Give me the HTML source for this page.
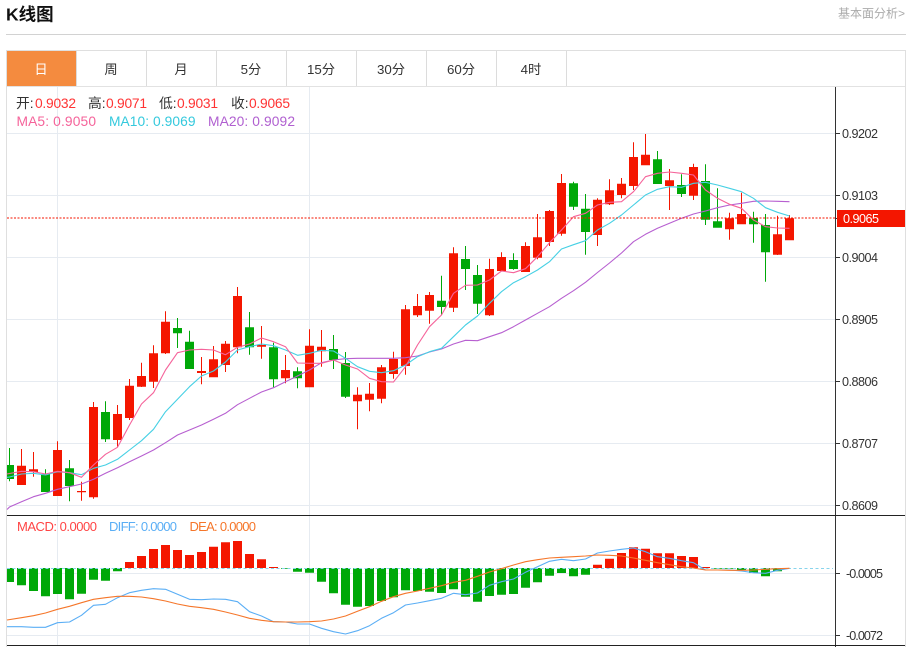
<!DOCTYPE html>
<html lang="zh">
<head>
<meta charset="utf-8">
<title>K线图</title>
<style>
html,body{margin:0;padding:0;background:#fff;width:910px;height:647px;overflow:hidden}
svg{display:block;position:absolute;left:0;top:0}
text{font-family:"Liberation Sans","Noto Sans CJK SC",sans-serif}
</style>
</head>
<body>
<svg width="910" height="647" viewBox="0 0 910 647" xmlns="http://www.w3.org/2000/svg">
<rect width="910" height="647" fill="#fff"/>
<text x="6" y="20.500" font-size="17.500" font-weight="700" fill="#111">K线图</text>
<text x="905" y="17.500" font-size="12" fill="#aaa" text-anchor="end">基本面分析&gt;</text>
<rect x="6" y="34" width="900" height="1" fill="#d2d2d2"/>

<!-- frame -->
<rect x="6" y="50" width="900" height="1" fill="#dfdfdf"/>
<rect x="6" y="50" width="1" height="597" fill="#dfdfdf"/>
<rect x="905" y="50" width="1" height="597" fill="#dfdfdf"/>
<rect x="7" y="86" width="898" height="1" fill="#e2e2e2"/>
<rect x="7" y="51" width="69" height="35" fill="#f48b3f"/>
<path d="M76 51h1v35h-1zM146 51h1v35h-1zM216 51h1v35h-1zM286 51h1v35h-1zM356 51h1v35h-1zM426 51h1v35h-1zM496 51h1v35h-1zM566 51h1v35h-1z" fill="#dcdcdc"/>
<g font-size="13.300" fill="#333" text-anchor="middle">
<text x="41" y="74" fill="#fff">日</text>
<text x="111" y="74">周</text>
<text x="181" y="74">月</text>
<text x="251" y="74">5分</text>
<text x="321" y="74">15分</text>
<text x="391" y="74">30分</text>
<text x="461" y="74">60分</text>
<text x="531" y="74">4时</text>
</g>

<!-- grid -->
<path d="M7 133h828v1H7zM7 195h828v1H7zM7 257h828v1H7zM7 319h828v1H7zM7 381h828v1H7zM7 443h828v1H7zM7 505h828v1H7zM7 573h828v1H7zM7 635h828v1H7zM57 87h1v558h-1zM309 87h1v558h-1z" fill="#e6ebf1"/>

<!-- candles: green -->
<path fill="#00a808" d="M9 448h1V481.3h-1zM45 469.3h1V492h-1zM69 460h1V501.3h-1zM105 401.3h1V442h-1zM177 318h1V348h-1zM189 330.7h1V369h-1zM249 312h1V354.7h-1zM273 342.7h1V387.3h-1zM297 367.3h1V388.3h-1zM333 335h1V369h-1zM345 352h1V398h-1zM441 275.7h1V315h-1zM465 246h1V290h-1zM477 265h1V314h-1zM513 253.3h1V269.7h-1zM573 181.7h1V210h-1zM585 194h1V254.7h-1zM657 151h1V184h-1zM681 174.3h1V197h-1zM705 164.3h1V225h-1zM717 188.3h1V227.7h-1zM753 211.7h1V242.7h-1zM765 214h1V281.7h-1z
M7 465h7V479H7zM41 474h9V492h-9zM65 468.3h9V486h-9zM101 412h9V439.3h-9zM173 328h9V333.3h-9zM185 341.7h9V369h-9zM245 327.3h9V347.3h-9zM269 347.3h9V379.3h-9zM293 371.3h9V378.3h-9zM329 349h9V360h-9zM341 363h9V396.7h-9zM437 300.7h9V307h-9zM461 259h9V269h-9zM473 275h9V303.7h-9zM509 260h9V269h-9zM569 183.3h9V206.7h-9zM581 208.7h9V232h-9zM653 159.3h9V184h-9zM677 185h9V194h-9zM701 181h9V219.7h-9zM713 221.3h9V227.7h-9zM749 218h9V224.3h-9zM761 225h9V252.3h-9z"/>
<!-- candles: red -->
<path fill="#f41600" d="M21 449h1V485h-1zM33 452h1V476.7h-1zM57 441.3h1V496h-1zM81 481.7h1V500.7h-1zM93 402h1V498.7h-1zM117 405h1V446.7h-1zM129 379h1V420h-1zM141 362.7h1V387h-1zM153 345.3h1V388h-1zM165 311.3h1V354h-1zM201 357h1V384.3h-1zM213 346h1V377.3h-1zM225 341h1V372h-1zM237 287h1V353.3h-1zM261 326h1V358.7h-1zM285 355h1V383.3h-1zM309 329.3h1V387.3h-1zM321 330h1V366.7h-1zM357 387.3h1V429.3h-1zM369 383h1V411.3h-1zM381 365h1V403.3h-1zM393 351.7h1V378.7h-1zM405 305h1V374.7h-1zM417 294h1V317h-1zM429 292h1V323.7h-1zM453 247.3h1V312h-1zM489 258.7h1V316h-1zM501 252.3h1V271.3h-1zM525 242.3h1V272h-1zM537 214h1V259.3h-1zM549 210h1V246h-1zM561 174h1V235.7h-1zM597 198.3h1V246h-1zM609 179.3h1V205h-1zM621 178h1V198.3h-1zM633 142.3h1V190h-1zM645 134h1V165.3h-1zM669 169h1V210h-1zM693 163.7h1V200h-1zM729 212.7h1V239.7h-1zM741 192.7h1V224.3h-1zM777 215.7h1V255h-1zM789 215h1V240.3h-1z
M17 465.7h9V485h-9zM29 469.3h9V472h-9zM53 450h9V496h-9zM77 491h9V492.3h-9zM89 407h9V497.3h-9zM113 414h9V440h-9zM125 385.7h9V418h-9zM137 376h9V386.7h-9zM149 353.3h9V381.7h-9zM161 321.7h9V353.3h-9zM197 371h9V373h-9zM209 359.3h9V377.3h-9zM221 343.7h9V365h-9zM233 296h9V347.3h-9zM257 345h9V346.7h-9zM281 370h9V378.3h-9zM305 345.7h9V387.3h-9zM317 346.7h9V351.3h-9zM353 394.7h9V401.3h-9zM365 393.7h9V399.7h-9zM377 367.3h9V398.7h-9zM389 359h9V374h-9zM401 309.3h9V366h-9zM413 306h9V315.3h-9zM425 295h9V310.7h-9zM449 253.3h9V307.7h-9zM485 269h9V315.3h-9zM497 257h9V271h-9zM521 246h9V272h-9zM533 237.3h9V257.7h-9zM545 211h9V242h-9zM557 183h9V233.7h-9zM593 199.7h9V235h-9zM605 190.3h9V204.3h-9zM617 183.7h9V195h-9zM629 157h9V186h-9zM641 154.7h9V165.3h-9zM665 180.3h9V186h-9zM689 167h9V195.7h-9zM725 218.3h9V229.3h-9zM737 214h9V224.3h-9zM773 234.3h9V254.7h-9zM785 218.3h9V240.3h-9z"/>

<!-- MA lines -->
<g fill="none" stroke-width="1.100" stroke-linejoin="round">
<path stroke="#b75fd0" d="M7 509.5L9.500 507L21.500 501.700L33.500 496.700L45.500 493.300L57.500 489.300L69.500 486.700L81.500 484L93.500 479.300L105.500 473.300L117.500 467.700L129.500 461.700L141.500 456L153.500 450L165.500 442.700L177.500 435L189.500 430L201.500 425L213.500 419.300L225.500 413.300L237.500 404.700L249.500 398.300L261.500 392L273.500 387.700L285.500 381.700L297.500 376L309.500 370L321.500 362.700L333.500 360L345.500 358.700L357.500 358.300L369.500 358.300L381.500 358.300L393.500 358.300L405.500 357.700L417.500 356L429.500 352L441.500 349L453.500 344L465.500 340.300L477.500 340.700L489.500 336.700L501.500 332.700L513.500 326.700L525.500 320L537.500 313.300L549.500 306.700L561.500 298.300L573.500 290.700L585.500 282.300L597.500 272.500L609.500 263L621.500 253L633.500 241.700L645.500 234.300L657.500 228.300L669.500 223.300L681.500 218.300L693.500 214L705.500 211L717.500 207.700L729.500 205L741.500 203.300L753.500 201.300L765.500 201L777.500 201.300L789.500 201.700"/>
<path stroke="#46d0e4" d="M7 477.300L9.500 477L21.500 474L33.500 473.300L45.500 475L57.500 471.700L69.500 472.700L81.500 474.700L93.500 468.300L105.500 465L117.500 459.300L129.500 450L141.500 440.700L153.500 429.300L165.500 411.700L177.500 399.300L189.500 386.700L201.500 376L213.500 371L225.500 362L237.500 350L249.500 346.700L261.500 344L273.500 345.700L285.500 350L297.500 355.300L309.500 353.300L321.500 350.300L333.500 351L345.500 358.300L357.500 366.700L369.500 371.300L381.500 372.700L393.500 370.700L405.500 365L417.500 356.700L429.500 351.700L441.500 348.300L453.500 336.700L465.500 325L477.500 316L489.500 303.300L501.500 291.700L513.500 282.700L525.500 276.700L537.500 270L549.500 261.700L561.500 249L573.500 244.700L585.500 240.700L597.500 230L609.500 223.300L621.500 215L633.500 205L645.500 195L657.500 189.300L669.500 186.700L681.500 187.300L693.500 183.300L705.500 182.300L717.500 185L729.500 188.300L741.500 191.700L753.500 198.300L765.500 207.700L777.500 212.300L789.500 216"/>
<path stroke="#f5639a" d="M7 474L9.500 473.500L21.500 471.300L33.500 471.700L45.500 474L57.500 471.300L69.500 472.700L81.500 477.300L93.500 465L105.500 454.300L117.500 447.300L129.500 425L141.500 404L153.500 392.700L165.500 370L177.500 352.700L189.500 350L201.500 349.300L213.500 350L225.500 354.700L237.500 347.300L249.500 344L261.500 338L273.500 341.700L285.500 346.700L297.500 363L309.500 363.300L321.500 363.300L333.500 360L345.500 365L357.500 369L369.500 378.300L381.500 381.700L393.500 382L405.500 366.700L417.500 345L429.500 326.700L441.500 315L453.500 293.300L465.500 285.300L477.500 285L489.500 280L501.500 271L513.500 272.700L525.500 268.700L537.500 256.700L549.500 242.700L561.500 230L573.500 216.700L585.500 213.300L597.500 205L609.500 202.300L621.500 201.700L633.500 191.700L645.500 176.700L657.500 173.300L669.500 172L681.500 173.300L693.500 175L705.500 190L717.500 198.300L729.500 204.300L741.500 208.300L753.500 220L765.500 226.700L777.500 228L789.500 228.300"/>
</g>

<!-- current price -->
<line x1="7" y1="218" x2="835" y2="218" stroke="#f41600" stroke-width="1" stroke-dasharray="2 1.500"/>

<!-- legends -->
<g font-size="13.800">
<text x="16" y="108" fill="#333">开:</text><text x="35" y="108" fill="#f33" textLength="41">0.9032</text>
<text x="88" y="108" fill="#333">高:</text><text x="106" y="108" fill="#f33" textLength="41">0.9071</text>
<text x="159" y="108" fill="#333">低:</text><text x="177" y="108" fill="#f33" textLength="41">0.9031</text>
<text x="231" y="108" fill="#333">收:</text><text x="249" y="108" fill="#f33" textLength="41">0.9065</text>
<text x="16.500" y="126" fill="#f5639a" textLength="79.500">MA5:  0.9050</text>
<text x="109" y="126" fill="#34c9dd" textLength="86.500">MA10:  0.9069</text>
<text x="208" y="126" fill="#b05fd0" textLength="87">MA20:  0.9092</text>
</g>

<!-- axis -->
<rect x="835" y="87" width="1" height="560" fill="#333"/>
<path d="M835 133h5v1h-5zM835 195h5v1h-5zM835 257h5v1h-5zM835 319h5v1h-5zM835 381h5v1h-5zM835 443h5v1h-5zM835 505h5v1h-5zM835 573h5v1h-5zM835 635h5v1h-5zM835 218h3v1h-3z" fill="#333"/>
<g font-size="12.600" fill="#333">
<text x="842" y="138" textLength="36">0.9202</text>
<text x="842" y="200" textLength="36">0.9103</text>
<text x="842" y="262" textLength="36">0.9004</text>
<text x="842" y="324" textLength="36">0.8905</text>
<text x="842" y="386" textLength="36">0.8806</text>
<text x="842" y="448" textLength="36">0.8707</text>
<text x="842" y="510" textLength="36">0.8609</text>
<text x="846" y="578" textLength="37">-0.0005</text>
<text x="846" y="640" textLength="37">-0.0072</text>
</g>
<rect x="837" y="210" width="68" height="17" fill="#f41600"/>
<text x="843" y="223" font-size="12.600" fill="#fff" textLength="36">0.9065</text>

<!-- separators -->
<rect x="7" y="515" width="898" height="1" fill="#222"/>
<rect x="7" y="645" width="898" height="1" fill="#222"/>

<!-- MACD legend -->
<g font-size="13">
<text x="17" y="531" fill="#f44" textLength="80">MACD: 0.0000</text>
<text x="109" y="531" fill="#5aaef5" textLength="68">DIFF: 0.0000</text>
<text x="189.500" y="531" fill="#f5762a" textLength="66.500">DEA: 0.0000</text>
</g>

<!-- MACD bars -->
<path fill="#00a808" d="M7 568h7V582H7zM17 568h9V585.300h-9zM29 568h9V591h-9zM41 568h9V596.300h-9zM53 568h9V594h-9zM65 568h9V599.300h-9zM77 568h9V593.700h-9zM89 568h9V579.700h-9zM101 568h9V580.700h-9zM113 568h9V571.300h-9zM281 568h9V568.700h-9zM293 568h9V571.700h-9zM305 568h9V572.700h-9zM317 568h9V581.700h-9zM329 568h9V593.300h-9zM341 568h9V604.700h-9zM353 568h9V606.700h-9zM365 568h9V606h-9zM377 568h9V601h-9zM389 568h9V597.300h-9zM401 568h9V590.300h-9zM413 568h9V591h-9zM425 568h9V591.700h-9zM437 568h9V593h-9zM449 568h9V589.300h-9zM461 568h9V596.700h-9zM473 568h9V601.700h-9zM485 568h9V596h-9zM497 568h9V594.700h-9zM509 568h9V594h-9zM521 568h9V587.700h-9zM533 568h9V582.300h-9zM545 568h9V575.700h-9zM557 568h9V573h-9zM569 568h9V576.300h-9zM581 568h9V574.700h-9zM713 568h9V568.800h-9zM725 568h9V568.800h-9zM737 568h9V570h-9zM749 568h9V573h-9zM761 568h9V576.300h-9zM773 568h9V571.300h-9z"/>
<path fill="#f41600" d="M125 562h9V568h-9zM137 556h9V568h-9zM149 549h9V568h-9zM161 545h9V568h-9zM173 550h9V568h-9zM185 555h9V568h-9zM197 552h9V568h-9zM209 546.700h9V568h-9zM221 542.300h9V568h-9zM233 541h9V568h-9zM245 554h9V568h-9zM257 559.300h9V568h-9zM269 567h9V568h-9zM593 564.700h9V568h-9zM605 558.700h9V568h-9zM617 553h9V568h-9zM629 547.300h9V568h-9zM641 548.700h9V568h-9zM653 553.300h9V568h-9zM665 553.300h9V568h-9zM677 556h9V568h-9zM689 557h9V568h-9zM701 567h9V568h-9z"/>
<line x1="7" y1="568.500" x2="833" y2="568.500" stroke="#88d4ec" stroke-width="1" stroke-dasharray="3 2.500"/>

<!-- DIFF/DEA -->
<g fill="none" stroke-width="1.100" stroke-linejoin="round">
<path stroke="#5aaef5" d="M7 626.700L21.500 626.700L33.500 627.300L45.500 627.300L57.500 622.700L69.500 622L81.500 615.300L93.500 605.300L105.500 604.300L117.500 597.700L129.500 592.700L141.500 590.300L153.500 588.700L165.500 589.300L177.500 594.300L189.500 599.300L201.500 599.700L213.500 599L225.500 599.300L237.500 601.700L249.500 611.700L261.500 616L273.500 621.700L285.500 622L297.500 624L309.500 624L321.500 628.300L333.500 631.700L345.500 634L357.500 630.700L369.500 625.700L381.500 618.300L393.500 612.700L405.500 605L417.500 603L429.500 600.700L441.500 598.300L453.500 593.300L465.500 594.700L477.500 593L489.500 585.300L501.500 581.700L513.500 579L525.500 572.300L537.500 566.700L549.500 561.300L561.500 559.300L573.500 560.700L585.500 559L597.500 553L609.500 551L621.500 549.300L633.500 548L645.500 551.700L657.500 556.700L669.500 558.300L681.500 560.700L693.500 562.700L705.500 570L717.500 570L729.500 570L741.500 571L753.500 572.700L765.500 573.300L777.500 570.300L789.500 568.300"/>
<path stroke="#f5762a" d="M7 620L21.500 617.700L33.500 615.700L45.500 613L57.500 609.300L69.500 606.300L81.500 602.700L93.500 599.300L105.500 597.700L117.500 596.300L129.500 596.300L141.500 597L153.500 598.700L165.500 601L177.500 604L189.500 606.300L201.500 607.700L213.500 609.300L225.500 612L237.500 615L249.500 618.300L261.500 620.300L273.500 621.700L285.500 622L297.500 622L309.500 621.700L321.500 621L333.500 619L345.500 616L357.500 611.300L369.500 606.700L381.500 601.300L393.500 596.700L405.500 593.300L417.500 591L429.500 588.300L441.500 585.700L453.500 582.300L465.500 580.300L477.500 576.300L489.500 572L501.500 568.700L513.500 565L525.500 561.700L537.500 559.700L549.500 558L561.500 557.300L573.500 556.700L585.500 556L597.500 555L609.500 555.300L621.500 556L633.500 558L645.500 560.300L657.500 562.700L669.500 564.700L681.500 566.700L693.500 568L705.500 570L717.500 570L729.500 570.300L741.500 570.300L753.500 570L765.500 569.300L777.500 568.700L789.500 568.300"/>
</g>
</svg>
</body>
</html>
